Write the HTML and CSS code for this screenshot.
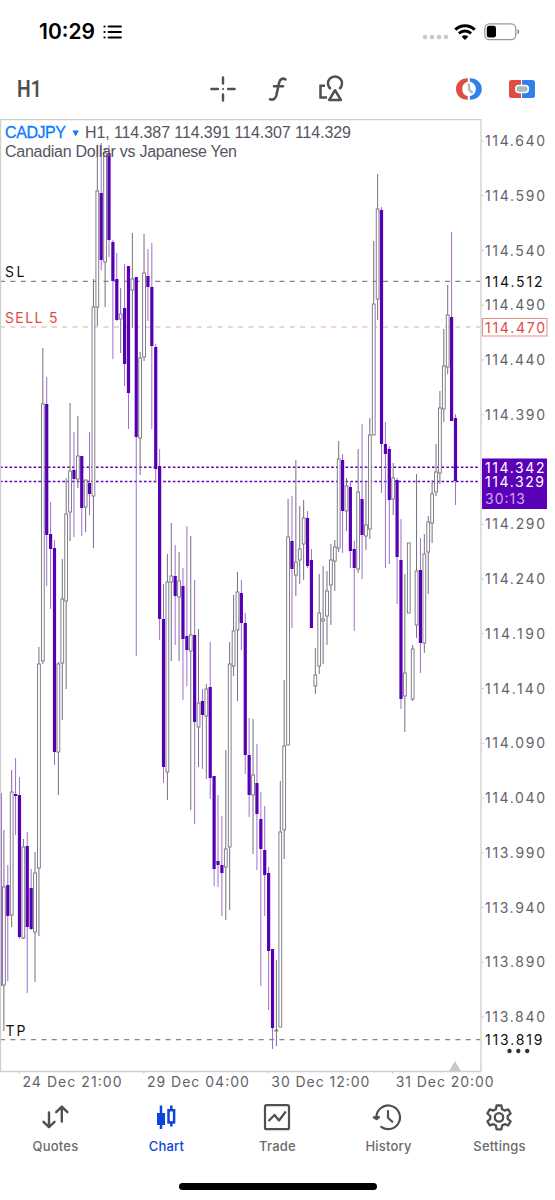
FILE: index.html
```html
<!DOCTYPE html>
<html lang="en">
<head>
    <meta charset="UTF-8">
    <meta name="viewport" content="width=device-width, initial-scale=1.0">
    <title>CADJPY H1</title>
    <link rel="stylesheet" href="styles.css">
</head>
<body>
    <header class="status-bar">
        <span class="time">10:29</span>
        <svg class="list-icon" width="20" height="16" viewBox="0 0 20 16">
            <path d="M5.5 2.5H18M5.5 8H18M5.5 13.5H18" stroke="#000" stroke-width="1.8" stroke-linecap="round"/>
            <path d="M1.5 2.5h.1M1.5 8h.1M1.5 13.5h.1" stroke="#000" stroke-width="2.2" stroke-linecap="round"/>
        </svg>
        <div class="signals">
            <svg class="dots" width="28" height="16" viewBox="0 0 28 16" fill="#c9c9c9">
                <circle cx="4" cy="13" r="2.3"/><circle cx="11" cy="13" r="2.3"/><circle cx="18" cy="13" r="2.3"/><circle cx="25" cy="13" r="2.3"/>
            </svg>
            <svg class="wifi" width="22" height="16" viewBox="0 0 22 16" fill="none" stroke="#000">
                <path d="M1.3 5.6C6.7.3 15.3.3 20.7 5.6" stroke-width="3"/>
                <path d="M4.9 9.4C8.4 6.2 13.6 6.2 17.1 9.4" stroke-width="2.8"/>
                <path d="M7.7 12.7C9.6 10.9 12.4 10.9 14.3 12.7L11 16Z" fill="#000" stroke="none"/>
            </svg>
            <svg class="battery" width="36" height="18" viewBox="0 0 36 18">
                <rect x=".8" y=".8" width="31" height="15.8" rx="4.6" fill="none" stroke="#999" stroke-width="1.3"/>
                <rect x="2.8" y="2.8" width="9.2" height="11.8" rx="2.4"/>
                <path d="M33.6 6c2 .8 2 4.600 0 5.400z" fill="#777"/>
            </svg>
        </div>
    </header>

    <div class="toolbar">
        <span class="timeframe">H1</span>
        <svg class="crosshair" width="28" height="28" viewBox="0 0 28 28" fill="none" stroke="#505050" stroke-width="2.4" stroke-linecap="round">
            <path d="M14 2.500v6M14 19.500v6M2.400 14h6.500M19.100 14h6.500"/>
            <path d="M14 14h.1" stroke-width="2"/>
        </svg>
        <svg class="function" width="20" height="28" viewBox="0 0 20 28" fill="none" stroke="#505050" stroke-width="2.6" stroke-linecap="round">
            <path d="M17.500 4.300C14.500 2.800 12 4 11.200 7.500L8.300 20.500C7.400 24 5 25.400 2 24.300M6 11.300h9"/>
        </svg>
        <svg class="objects" width="28" height="28" viewBox="0 0 28 28" fill="none" stroke="#505050" stroke-width="2.500">
            <path d="M8 10.800H3.500V22.600H10"/>
            <path d="M13.800 14A7 7 0 1 1 22.200 14"/>
            <path d="M18 15.200L12.200 25H23.900Z" stroke-linejoin="round"/>
        </svg>
        <svg class="session" width="28" height="24" viewBox="0 0 28 24">
            <path d="M12.800 1.200C5.500 1.200 1 6 1 12s4.500 10.800 11.800 10.800v-3.600C9.300 18.400 7.300 15.700 7.300 12s2-6.400 5.500-7.200z" fill="#dc4f42"/>
            <path d="M14.800 1.200C22 1.200 26.800 6 26.800 12S22 22.800 14.800 22.800v-3.600c3.700-.7 6-3.400 6-7.200s-2.300-6.500-6-7.200z" fill="#2f7fec"/>
            <path d="M14 6.500V12.500L17.600 16" fill="none" stroke="#a9b9bd" stroke-width="2.200"/>
        </svg>
        <svg class="trade-panel" width="28" height="20" viewBox="0 0 28 20">
            <path d="M3.500 1H13v18H3.500A2.500 2.500 0 0 1 1 16.500v-13A2.500 2.500 0 0 1 3.500 1z" fill="#dc4f42"/>
            <path d="M14 1h10.500A2.500 2.500 0 0 1 27 3.500v13a2.500 2.500 0 0 1-2.500 2.500H14z" fill="#2f7fec"/>
            <rect x="7.800" y="6.500" width="12.500" height="7" rx="3" fill="#a9b9bd" stroke="#fff" stroke-width="1.500"/>
        </svg>
    </div>

    <svg id="chart" class="chart" width="555" height="974" viewBox="0 119 555 974">
        <g id="levels"></g>
        <g id="candles"></g>
        <path class="frame" d="M.5 1071.500V119.500H481V1071.500H0"/>
        <path class="shift-mark" d="M449 1071L455 1061L461 1071Z"/>
        <g id="axis"></g>

        <text class="symbol" x="5" y="137.500" textLength="61">CADJPY</text>
        <path d="M72.500 130.500h6.400l-3.200 6z" fill="#0a7aff"/>
        <text class="info" x="85" y="137.500" textLength="266">H1, 114.387 114.391 114.307 114.329</text>
        <text class="info" x="5" y="156.500" textLength="232">Canadian Dollar vs Japanese Yen</text>

        <text class="label black" x="5" y="277" textLength="19.500">SL</text>
        <text class="label red" x="5" y="323" textLength="52.500">SELL 5</text>
        <text class="label black" x="5.500" y="1036" textLength="20">TP</text>

        <rect class="bid-box" x="482" y="458.500" width="65" height="50.500"/>
        <rect class="order-box" x="482.500" y="318.500" width="64.500" height="17.500"/>
        <text class="label black" x="485" y="286.500" textLength="57.500">114.512</text>
        <text class="label red" x="485" y="332.500" textLength="60">114.470</text>
        <text class="label white" x="485" y="472.500" textLength="59.500">114.342</text>
        <text class="label white" x="485" y="487" textLength="59">114.329</text>
        <text class="label timer" x="485" y="503.500" textLength="40">30:13</text>
        <text class="label black" x="485" y="1045" textLength="57.500">113.819</text>
        <g fill="#333"><circle cx="509.500" cy="1051" r="2.200"/><circle cx="518.300" cy="1051" r="2.200"/><circle cx="527.200" cy="1051" r="2.200"/></g>
    </svg>

    <nav class="tabs">
        <a class="tab">
            <svg width="32" height="32" viewBox="0 0 32 32" fill="none" stroke="#505050" stroke-width="2.400" stroke-linecap="round" stroke-linejoin="round">
                <path d="M10 11.500V26M4.500 20.800L10 26.200L15.500 20.800M22.800 20.500V6M17.200 11.200L22.800 5.600L28.400 11.200"/>
            </svg>
            <span>Quotes</span>
        </a>
        <a class="tab active">
            <svg width="32" height="32" viewBox="0 0 32 32" fill="none" stroke="#0b45dc" stroke-width="2.500">
                <path d="M11 4.500V28M21.300 4.500V9M21.300 22V25.500"/>
                <rect x="7" y="12" width="8" height="12" fill="#0b45dc" stroke="none"/>
                <rect x="18.500" y="9.200" width="5.600" height="12.200"/>
            </svg>
            <span>Chart</span>
        </a>
        <a class="tab">
            <svg width="32" height="32" viewBox="0 0 32 32" fill="none" stroke="#505050" stroke-width="2.200" stroke-linejoin="round">
                <rect x="4" y="4.200" width="24" height="24" rx="1.500"/>
                <path d="M7.500 20L13.500 14L18 19.500L24.800 10.500"/>
            </svg>
            <span>Trade</span>
        </a>
        <a class="tab">
            <svg width="32" height="32" viewBox="0 0 32 32" fill="none" stroke="#505050" stroke-width="2.200" stroke-linecap="round" stroke-linejoin="round">
                <path d="M4.400 16.500A11.800 11.800 0 1 1 9.200 25.800"/>
                <path d="M1.800 16.300L4.600 18.200L7 16.200Z" fill="#505050"/>
                <path d="M16 10V16.800L20.300 20.800"/>
            </svg>
            <span>History</span>
        </a>
        <a class="tab">
            <svg width="32" height="32" viewBox="0 0 32 32" fill="none" stroke="#505050" stroke-width="2.300" stroke-linejoin="round">
                <path d="M13.600 4.500H18.400L19.100 8.200L21.600 9.600L25.200 8.400L27.600 12.500L24.700 15V17.800L27.600 20.300L25.200 24.400L21.600 23.200L19.100 24.600L18.400 28.300H13.600L12.900 24.600L10.400 23.200L6.800 24.400L4.400 20.300L7.300 17.800V15L4.400 12.500L6.800 8.400L10.400 9.600L12.900 8.200Z"/>
                <circle cx="16" cy="16.400" r="4.200"/>
            </svg>
            <span>Settings</span>
        </a>
    </nav>
    <div class="home-indicator"></div>

    <script src="chart.js"></script>
</body>
</html>
```
FILE: styles.css
```css
* {
    box-sizing: border-box;
}
body {
    margin: 0;
    width: 555px;
    height: 1200px;
    background-color: #fff;
    font-family: Inter, "Liberation Sans", sans-serif;
    overflow: hidden;
}
svg {
    display: block;
}
.status-bar {
    display: flex;
    align-items: center;
    height: 63px;
    padding: 0 35px 0 39px;
}
.time {
    width: 60px;
    font-size: 21px;
    font-weight: 600;
    letter-spacing: 0;
}
.list-icon {
    margin-left: 4px;
}
.signals {
    display: flex;
    align-items: center;
    margin-left: auto;
}
.dots {
    margin-right: -1px;
}
.wifi {
    margin-left: 6px;
}
.battery {
    margin-left: 8px;
}
.toolbar {
    display: flex;
    align-items: center;
    height: 56px;
    padding: 0 19px 4px 17px;
}
.timeframe {
    width: 192px;
    font-family: Roboto, sans-serif;
    font-size: 23px;
    font-weight: 600;
    color: #505050;
    transform: scaleX(0.84);
    transform-origin: left;
}
.function {
    margin-left: 31px;
}
.objects {
    margin-left: 29px;
}
.session {
    margin-left: auto;
}
.trade-panel {
    margin-left: 25px;
}
.chart {
    height: 974px;
}
.frame {
    fill: none;
    stroke: #cfcfcf;
    stroke-width: 1.3;
}
.shift-mark {
    fill: #c9c9c9;
}
.tick {
    stroke: #cfcfcf;
}
.up {
    fill: #fff;
    stroke: #757080;
    stroke-width: 0.9;
}
.down {
    fill: #5600b4;
}
.up-wick {
    stroke: #757080;
}
.down-wick {
    stroke: #9f6fca;
}
.stop-line,
.order-line {
    stroke: #858585;
    stroke-width: 1.2;
    stroke-dasharray: 5 5.35;
}
.order-line {
    stroke: #dfaaa2;
}
.price-line {
    stroke: #5a00b8;
    stroke-width: 1.5;
    stroke-dasharray: 2.6 2.2;
}
.symbol,
.info {
    font-family: "Liberation Sans", sans-serif;
    font-size: 16px;
    fill: #55555f;
}
.symbol {
    fill: #0a7aff;
    stroke: #0a7aff;
    stroke-width: 0.3;
}
.label {
    font-size: 14px;
    fill: #636369;
}
.black {
    fill: #111;
}
.red {
    fill: #dc4c3e;
}
.white {
    fill: #fff;
}
.timer {
    fill: #cfa9f3;
}
.bid-box {
    fill: #5a00b8;
}
.order-box {
    fill: #fff;
    stroke: #e58e85;
}
.tabs {
    display: flex;
    height: 91px;
    padding-top: 8px;
}
.tab {
    flex: 1;
    display: flex;
    flex-direction: column;
    align-items: center;
    font-size: 13px;
    line-height: 16px;
    letter-spacing: 0.2px;
    font-weight: 500;
    color: #6b6b6b;
}
.tab svg {
    margin-left: -1px;
}
.tab span {
    margin-top: 5px;
}
.tab.active {
    color: #0b45dc;
}
.home-indicator {
    width: 198px;
    height: 7px;
    margin: -1px 0 0 179px;
    border-radius: 4px;
    background-color: #000;
}
```
FILE: chart.js
```js
// [direction, high, body top, body bottom, low], oldest first
const candles = [
    ['d',793,793,986,986], ['u',830,887,985,1031], ['d',865,885,916,981], ['u',770,792,915,927],
    ['d',758,794,796,835], ['d',777,795,937,939], ['u',839,847,938,939], ['d',832,846,927,993],
    ['d',869,888,929,930], ['u',852,873,932,982], ['u',647,664,868,936], ['u',348,404,661,664],
    ['d',377,404,535,586], ['d',502,534,549,609], ['d',540,548,752,765], ['u',662,664,752,795],
    ['u',559,599,663,720], ['u',478,514,601,689], ['u',403,471,512,541], ['d',432,470,479,537],
    ['u',416,456,479,488], ['d',456,456,508,536], ['u',480,480,507,532], ['d',432,483,494,515],
    ['u',279,307,496,548], ['u',145,191,307,326], ['d',143,193,260,270], ['u',148,153,262,307],
    ['d',145,153,240,257], ['d',240,242,281,359], ['d',253,279,320,321], ['u',288,314,319,353],
    ['d',264,308,364,386], ['d',266,266,393,429], ['u',233,279,290,328], ['d',277,277,437,656],
    ['u',352,358,438,475], ['u',234,273,357,361], ['d',249,276,287,321], ['d',243,287,346,429],
    ['d',344,347,469,483], ['d',449,466,619,640], ['d',584,619,767,783], ['u',554,582,772,800],
    ['u',523,576,582,661], ['d',545,576,596,645], ['u',552,581,597,661], ['d',568,586,639,700],
    ['d',526,636,650,686], ['u',536,635,651,810], ['d',580,635,722,824], ['u',629,703,727,767],
    ['d',689,701,715,769], ['u',684,689,716,779], ['d',642,687,778,799], ['d',776,776,869,886],
    ['d',795,861,865,887], ['d',816,865,873,916], ['u',750,849,867,920], ['u',642,664,847,910],
    ['u',595,631,666,676], ['u',572,592,630,701], ['d',580,593,623,650], ['d',613,623,755,774],
    ['d',718,755,795,817], ['u',719,775,795,854], ['d',744,783,814,870], ['d',792,819,849,986],
    ['d',806,850,875,916], ['d',867,873,951,1010], ['d',949,949,1028,1049], ['u',960,1030,1031,1046],
    ['u',781,832,1027,1027], ['u',680,746,830,859], ['u',499,537,745,745], ['d',496,541,569,628],
    ['u',460,562,575,596], ['u',506,549,560,584], ['u',500,518,544,580], ['d',511,518,566,568],
    ['d',549,560,628,628], ['u',648,675,686,694], ['u',574,613,666,674], ['u',566,619,621,664],
    ['u',571,591,616,645], ['u',544,560,585,625], ['u',540,547,561,591], ['u',441,459,548,552],
    ['d',454,460,511,553], ['u',478,486,511,531], ['d',482,487,551,568], ['d',541,549,568,631],
    ['u',449,492,569,573], ['d',424,499,535,579], ['u',481,525,536,550], ['u',418,435,529,539],
    ['u',241,304,435,435], ['u',174,209,299,320], ['d',207,210,444,493], ['d',422,444,454,568],
    ['d',446,449,500,564], ['u',463,478,499,515], ['d',478,480,557,604], ['d',519,560,699,709],
    ['u',574,673,696,732], ['u',543,543,613,613], ['u',645,649,699,701], ['u',474,571,625,638],
    ['d',538,570,643,673], ['u',534,554,643,653], ['u',516,522,552,594], ['u',480,494,523,543],
    ['u',444,472,492,496], ['u',391,408,473,484], ['u',329,366,409,422], ['u',285,315,367,374],
    ['d',232,317,421,421], ['d',414,418,481,505]
];
const step = 3.893;

let bars = '';
candles.forEach(function (c, i) {
    const x = i * step;
    const dir = c[0] === 'u' ? 'up' : 'down';
    const half = dir === 'up' ? 1.4 : 1.6;
    bars += `<path class="${dir}-wick" d="M${x} ${c[1]}V${c[4]}"/>`;
    bars += `<rect class="${dir}" x="${x - half}" y="${c[2]}" width="${half * 2}" height="${c[3] - c[2]}"/>`;
});
document.getElementById('candles').innerHTML = bars;

// horizontal levels: SL, order, ask, bid, TP
const levels = [['stop', 281.3], ['order', 327], ['price', 467.2], ['price', 481.5], ['stop', 1039.7]];
document.getElementById('levels').innerHTML = levels.map(function (l) {
    return `<path class="${l[0]}-line" d="M0 ${l[1]}H480"/>`;
}).join('');

// price scale, the 114.340 mark is covered by the current price
let axis = '';
for (let i = 0; i < 17; i++) {
    const y = 141 + i * 54.75;
    if (i !== 6) {
        axis += `<path class="tick" d="M481 ${y}h3"/>`;
        axis += `<text class="label" x="485" y="${y + 5}" textLength="60">${(114.64 - i * 0.05).toFixed(3)}</text>`;
    }
}
const dates = ['24 Dec 21:00', '29 Dec 04:00', '30 Dec 12:00', '31 Dec 20:00'];
dates.forEach(function (d, i) {
    const x = 19.5 + i * 124.4;
    axis += `<path class="tick" d="M${x} 1071v3"/>`;
    axis += `<text class="label" x="${x + 3}" y="1087" textLength="${i === 0 ? 99 : i === 1 ? 102 : 98}">${d}</text>`;
});
document.getElementById('axis').innerHTML = axis;
```
